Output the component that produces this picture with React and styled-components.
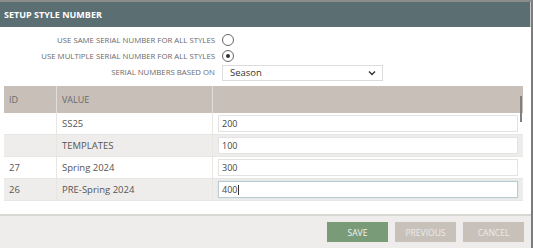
import styled, { createGlobalStyle } from "styled-components";

const Global = createGlobalStyle`
  html, body { margin: 0; padding: 0; background: #fff; }
  body { font-family: "Open Sans", "Liberation Sans", sans-serif; }
`;

const Dialog = styled.div`
  width: 533px;
  height: 248px;
  box-sizing: border-box;
  border-top: 2px solid #8c8c8c;
  border-right: 2px solid #7c7c7c;
  display: flex;
  flex-direction: column;
  overflow: hidden;
`;

const Header = styled.div`
  height: 25px;
  flex-shrink: 0;
  background: #5b6e72;
  color: #fff;
  font-weight: 700;
  font-size: 9px;
  display: flex;
  align-items: center;
  padding-left: 4px;
  border-right: 1px solid #c9c9c9;
`;

const Body = styled.div`
  flex: 1;
  display: flex;
  flex-direction: column;
  padding: 5px 0 0 4px;
`;

const Options = styled.div`
  display: grid;
  grid-template-columns: 211px 1fr;
  column-gap: 7px;
  align-items: center;
`;

const Label = styled.div`
  text-align: right;
  font-size: 7.8px;
  color: #6a6a6a;
  height: ${p => p.h || 16}px;
  line-height: ${p => p.h || 16}px;
  white-space: nowrap;
`;

const Radio = styled.span`
  width: 10px;
  height: 10px;
  border-radius: 50%;
  border: 1px solid #666;
  display: flex;
  align-items: center;
  justify-content: center;
  &::after {
    content: "";
    width: 4px;
    height: 4px;
    border-radius: 50%;
    background: ${p => (p.checked ? "#333" : "transparent")};
  }
`;

const Select = styled.div`
  width: 161px;
  height: 16px;
  box-sizing: border-box;
  border: 1px solid #dcdcdc;
  display: flex;
  align-items: center;
  justify-content: space-between;
  padding: 0 6px 0 7px;
  font-size: 9.5px;
  color: #333;
`;

const TableWrap = styled.div`
  position: relative;
  margin: 5px 8px 0 0;
`;

const Table = styled.div`
  display: grid;
  grid-template-columns: 52px 156px 1fr;
`;

const HeadCell = styled.div`
  height: 27px;
  background: #c7bfb8;
  color: #6a6a6a;
  font-size: 9px;
  display: flex;
  align-items: center;
  padding-left: 5px;
  border-left: ${p => (p.first ? "none" : "1px solid #e2ddd8")};
`;

const Cell = styled.div`
  height: 22px;
  box-sizing: border-box;
  background: ${p => (p.alt ? "#efedeb" : "#fff")};
  border-bottom: 1px solid #e8e6e3;
  border-left: ${p => (p.first ? "none" : "1px solid #e8e6e3")};
  color: #555;
  font-size: 9.5px;
  display: flex;
  align-items: center;
  padding: 0 5px;
`;

const Input = styled.div`
  flex: 1;
  height: 17px;
  box-sizing: border-box;
  background: #fff;
  border: 1px solid ${p => (p.focus ? "#b9cdd3" : "#e3e3e3")};
  box-shadow: ${p => (p.focus ? "0 0 2px #c8dde2" : "none")};
  font-size: 9px;
  color: #444;
  display: flex;
  align-items: center;
  padding-left: 3px;
`;

const Caret = styled.span`
  width: 1px;
  height: 10px;
  background: #333;
  margin-left: 1px;
`;

const Scroll = styled.div`
  position: absolute;
  right: 1px;
  top: 10px;
  width: 2px;
  height: 26px;
  background: #808080;
`;

const Footer = styled.div`
  height: 34px;
  flex-shrink: 0;
  box-sizing: border-box;
  border-top: 2px solid #d9d7d4;
  background: #efedeb;
  display: flex;
  justify-content: flex-end;
  align-items: flex-start;
  gap: 7px;
  padding: 6px 7px 0 0;
`;

const Button = styled.div`
  width: 61px;
  height: 20px;
  background: ${p => (p.primary ? "#7a9b78" : "#c8c1ba")};
  color: ${p => (p.primary ? "#f4f4f4" : "#ecebe9")};
  font-size: 8.5px;
  display: flex;
  align-items: center;
  justify-content: center;
`;

const rows = [
  { id: "", value: "SS25", num: "200" },
  { id: "", value: "TEMPLATES", num: "100" },
  { id: "27", value: "Spring 2024", num: "300" },
  { id: "26", value: "PRE-Spring 2024", num: "400", focus: true },
];

export default function App() {
  return (
    <>
      <Global />
      <Dialog>
        <Header>SETUP STYLE NUMBER</Header>
        <Body>
          <Options>
            <Label>USE SAME SERIAL NUMBER FOR ALL STYLES</Label>
            <Radio />
            <Label>USE MULTIPLE SERIAL NUMBER FOR ALL STYLES</Label>
            <Radio checked />
            <Label h={17}>SERIAL NUMBERS BASED ON</Label>
            <Select>
              <span>Season</span>
              <svg width="8" height="6" viewBox="0 0 8 6">
                <path d="M1 1.5 L4 4.5 L7 1.5" fill="none" stroke="#333" strokeWidth="1.4" />
              </svg>
            </Select>
          </Options>
          <TableWrap>
            <Table>
              <HeadCell first>ID</HeadCell>
              <HeadCell>VALUE</HeadCell>
              <HeadCell />
              {rows.map((r, i) => [
                <Cell key={`a${i}`} first alt={i % 2 === 1}>{r.id}</Cell>,
                <Cell key={`b${i}`} alt={i % 2 === 1}>{r.value}</Cell>,
                <Cell key={`c${i}`} alt={i % 2 === 1}>
                  <Input focus={r.focus}>
                    {r.num}
                    {r.focus && <Caret />}
                  </Input>
                </Cell>,
              ])}
            </Table>
            <Scroll />
          </TableWrap>
        </Body>
        <Footer>
          <Button primary>SAVE</Button>
          <Button>PREVIOUS</Button>
          <Button>CANCEL</Button>
        </Footer>
      </Dialog>
    </>
  );
}
